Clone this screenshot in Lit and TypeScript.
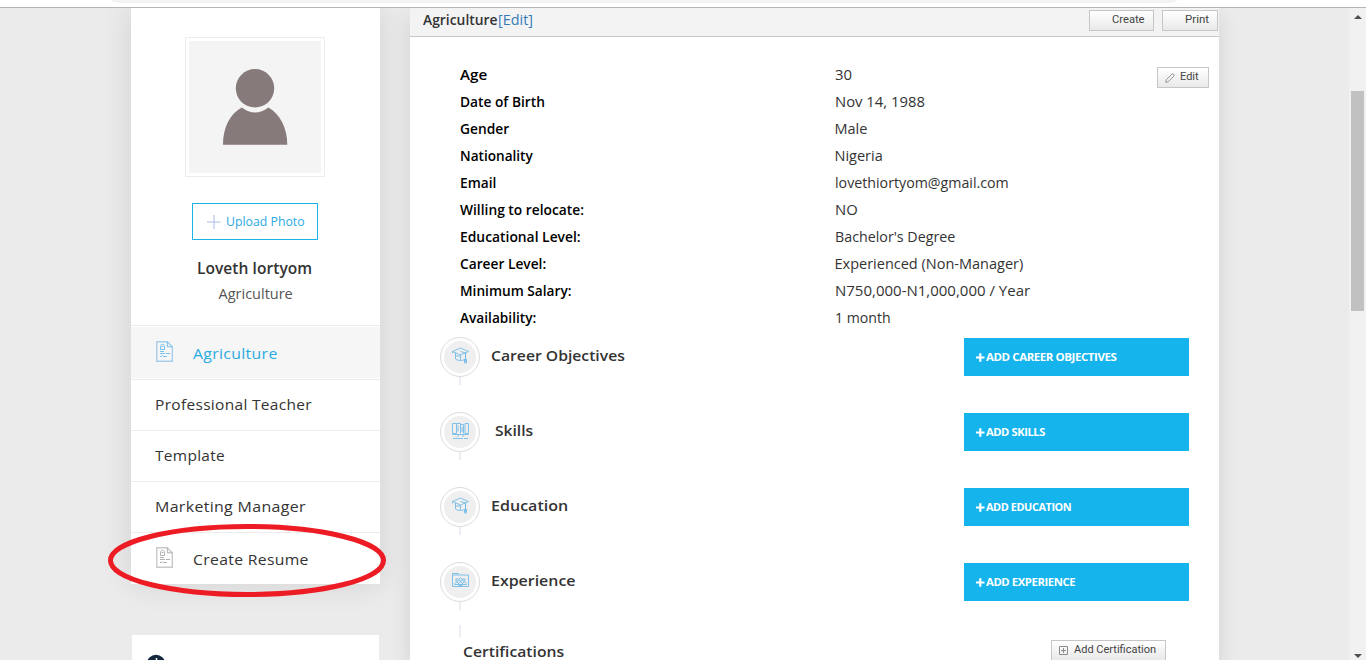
import { LitElement, html, css, svg } from "lit";
import { customElement, property } from "lit/decorators.js";

/** One line of text whose letters are widened or narrowed to fill a given width. */
@customElement("fit-text")
class FitText extends LitElement {
  @property() text = "";
  @property({ type: Number }) w = 0;
  static styles = css`
    :host { display: inline-block; white-space: pre; vertical-align: top; }
    .run { display: inline-block; transform-origin: 0 50%; vertical-align: top; }
  `;
  render() {
    return html`<span class="run">${this.text}</span>`;
  }
  updated() {
    const run = this.renderRoot.querySelector(".run") as HTMLElement;
    this.style.width = `${this.w}px`;
    run.style.transform = `scaleX(${(this.w / run.offsetWidth).toFixed(4)})`;
  }
}

const fit = (text: string, w: number) => html`<fit-text .text=${text} .w=${w}></fit-text>`;

const facts: [string, number, string, number][] = [
  ["Age", 27, "30", 17.5],
  ["Date of Birth", 84.5, "Nov 14, 1988", 90],
  ["Gender", 49, "Male", 33],
  ["Nationality", 72.5, "Nigeria", 48],
  ["Email", 36.5, "lovethiortyom@gmail.com", 173.5],
  ["Willing to relocate:", 123.5, "NO", 22.5],
  ["Educational Level:", 121, "Bachelor's Degree", 120],
  ["Career Level:", 86.5, "Experienced (Non-Manager)", 189],
  ["Minimum Salary:", 111.5, "N750,000-N1,000,000 / Year", 195.5],
  ["Availability:", 76, "1 month", 55.5],
];

const cap = svg`<path d="M.5 4.500 8.500 1l8 3.500-8 3.500zM3.500 6v6c3 2 7 2 10 0V6M8.500 4.500l5 1.500v9M12.500 12v4h2v-4M3 9h5M8.500 8v5M.5 4.500v2"/>`;
const books = svg`<path d="M.5 1.500h4v10h-4zM4.500 1.500h4v10M8.500 2.500h3v9M13 1.500h3.500v10H13zM6 3.500v6M10 5v5M.5 12.500h16M6 13v2M11 13v2M1 16.500h10M12 16.500h4"/>`;
const folder = svg`<path d="M.5 1.500h6l1 1.500h9v11.500H.5zM1 3h6"/><circle cx="5" cy="8" r="1.300"/><circle cx="8.500" cy="7.500" r="1.500"/><circle cx="12" cy="8" r="1.300"/><path d="M2.500 12.500c0-3 4-3 4-.5 0-2.500 4-2.500 4 0 0-2.500 4-2.500 4 .5zM6.500 13.500h4"/>`;

const sections = [
  { title: "Career Objectives", w: 134, glyph: cap, cta: "ADD CAREER OBJECTIVES", cw: 130.5, wide: false },
  { title: "Skills", w: 38.5, glyph: books, cta: "ADD SKILLS", cw: 58.5, wide: true },
  { title: "Education", w: 77, glyph: cap, cta: "ADD EDUCATION", cw: 85, wide: false },
  { title: "Experience", w: 85, glyph: folder, cta: "ADD EXPERIENCE", cw: 89.5, wide: false },
];

const resumeIcon = html`<svg class="doc" width="17" height="21" viewBox="0 0 17 21">
  <path class="edge" d="M.8.8h10.500l5 5v14.500H.800z" />
  <path d="M11.300.8v5h5M4.500 8.500v-3c0-3 4-3 4 0v3zM5.500 5.500h2M4 10.500h4M4 12.500h5M10 12.500h4M4 15.500h1l1.500-1M7 15.500h4" />
</svg>`;

@customElement("app-root")
class AppRoot extends LitElement {
  static styles = css`
    :host {
      display: block; position: relative; width: 1366px; height: 660px; overflow: hidden;
      background: #ebebeb; font-family: "Open Sans", "Noto Sans", sans-serif; color: #333;
    }
    * { box-sizing: border-box; }
    svg { display: block; flex: none; }
    .chrome { height: 8px; background: #fff; border-bottom: 1px solid #b4b4b4; position: relative; z-index: 2; }
    .omnibox { height: 3px; margin-left: 112px; width: 1065px; background: #f1f3f4; border-radius: 0 0 10px 10px / 0 0 3px 3px; }
    .page { display: flex; height: 652px; }
    .side { width: 249px; margin-left: 131px; flex: none; }
    .profile-card { height: 576px; background: #fff; box-shadow: 0 0 30px rgba(0,0,0,.11); display: flex; flex-direction: column; }
    .profile { height: 317px; display: flex; flex-direction: column; align-items: center; padding-top: 29px; }
    .avatar { width: 140px; height: 140px; border: 1px solid #ededed; padding: 3px; margin-right: 1px; }
    .upload { margin-top: 26px; margin-right: 1px; width: 126px; height: 37px; border: 1px solid #16b4e9; color: #2aaae2; font-size: 13px; line-height: 35px; display: flex; align-items: center; padding-left: 13.500px; gap: 5px; }
    .name { margin: 16px 1px 0 0; font-size: 15.500px; font-weight: 600; line-height: 24px; }
    .role { font-size: 14.500px; line-height: 24px; margin-top: 2px; color: #555; }
    .item { border-top: 1px solid #ececec; height: 51px; font-size: 15px; letter-spacing: .3px; display: flex; align-items: center; padding: 0 0 3px 23.500px; }
    .item.icon { padding: 0 0 0 25px; gap: 20px; height: 52px; }
    .item.on { height: 54px; background: #f6f6f6; color: #2aaae2; box-shadow: inset 0 1px #fff, inset 0 -1px #fff; }
    .doc { fill: none; stroke: #a7a7a7; stroke-width: .9; margin-bottom: 3px; }
    .doc .edge { stroke: #c9c9cd; stroke-width: 1.400; }
    .on .doc { stroke: #68bdea; }
    .on .doc .edge { stroke: #a5cdec; }
    .next-card { margin: 51px 1px 0; height: 25px; background: #fff; padding: 19px 0 0 15px; overflow: hidden; }
    .main { width: 809px; margin-left: 30px; background: #fff; box-shadow: 0 8px 20px rgba(0,0,0,.11); flex: none; }
    .head { height: 29px; background: #f3f3f3; border-bottom: 1px solid #c8c8c8; display: flex; padding: 2px 1px 0 13px; }
    .title { font-size: 13.500px; font-weight: 600; line-height: 20px; }
    .link { font-size: 14px; line-height: 20px; color: #337ab7; flex: 1; }
    .btn { height: 21px; border: 1px solid #c6c6c6; background: linear-gradient(#fff, #e9e9e9); font: 11px/17px Roboto, sans-serif; color: #444; display: flex; padding-right: 9px; justify-content: flex-end; }
    .create { width: 65px; margin-right: 8px; }
    .print { width: 56px; padding-right: 8px; }
    .facts { display: flex; height: 300px; padding: 25px 10px 0 50px; }
    .labels { width: 374.500px; font-size: 13.500px; font-weight: 600; color: #000; }
    .values { flex: 1; font-size: 14.500px; color: #333; margin-top: -1px; }
    .line { height: 27px; line-height: 27px; }
    .edit { width: 52px; margin-top: 5px; justify-content: flex-start; padding-left: 7px; gap: 5px; }
    .edit svg { margin-top: 5px; }
    .section { height: 75px; display: flex; padding: 0 30px; align-items: flex-start; }
    .marker { width: 40px; display: flex; flex-direction: column; align-items: center; }
    .ring { width: 40px; height: 40px; border: 1px solid #dcdcdc; border-radius: 50%; padding: 3px; }
    .disc { width: 32px; height: 32px; border-radius: 50%; background: #efefef; display: flex; align-items: center; justify-content: center; padding-bottom: 4px; }
    .disc svg { fill: none; stroke: #64b5e6; stroke-width: .8; }
    .stem { width: 2px; height: 8px; background: #ededf4; }
    .heading { font-size: 15px; font-weight: 600; line-height: 24px; margin: 6px 0 0 11px; flex: 1; }
    .heading.wide { margin-left: 15px; }
    .cta { width: 225px; height: 38px; margin-top: 1px; background: #16b4ec; color: #fff; font-size: 10.500px; font-weight: 700; letter-spacing: -.4px; line-height: 38px; display: flex; align-items: center; padding-left: 12px; gap: 1px; }
    .tail { padding: 0 53px; display: flex; flex-direction: column; margin-top: -12px; }
    .tail .stem { height: 12px; margin-left: -4px; }
    .cert { display: flex; justify-content: space-between; margin-top: 3px; }
    .cert .heading { margin: 0; height: 20px; line-height: 22px; }
    .add { width: 115px; padding: 0 0 0 7px; justify-content: flex-start; gap: 6px; }
    .add svg { margin-top: 5px; }
    .scroll { width: 17px; margin-left: auto; background: #f1f1f1; padding: 7px 2px 0; display: flex; flex-direction: column; align-items: center; }
    .thumb { width: 13px; height: 220px; margin: 72px 0 343px; background: #c1c1c1; flex: none; }
    .callout { position: absolute; left: 108px; top: 524px; z-index: 3; }
  `;

  render() {
    return html`
      <div class="chrome"><div class="omnibox"></div></div>
      <div class="page">
        <aside class="side">
          <div class="profile-card">
            <div class="profile">
              <div class="avatar">
                <svg width="132" height="132" viewBox="0 0 132 132">
                  <rect width="132" height="132" fill="#f4f4f4" />
                  <g fill="#877a7b">
                    <circle cx="66" cy="47.300" r="19.200" />
                    <path d="M34 103.700c0-17 7-31 18.800-37.200q13.300 10 26.600 0C91 73 98.300 87 98.300 103.700z" />
                  </g>
                </svg>
              </div>
              <div class="upload">
                <svg width="14" height="14" viewBox="0 0 14 14"><path d="M0 7h13.500M7 0v14" stroke="#a9bce8" stroke-width="1" /></svg>
                ${fit("Upload Photo", 78.5)}
              </div>
              <div class="name">${fit("Loveth Iortyom", 115.5)}</div>
              <div class="role">${fit("Agriculture", 74)}</div>
            </div>
            <div class="item icon on">${resumeIcon}${fit("Agriculture", 84.5)}</div>
            <div class="item">${fit("Professional Teacher", 157)}</div>
            <div class="item">${fit("Template", 70)}</div>
            <div class="item">${fit("Marketing Manager", 151)}</div>
            <div class="item icon">${resumeIcon}${fit("Create Resume", 115.5)}</div>
          </div>
          <div class="next-card">
            <svg width="18" height="18" viewBox="0 0 18 18"><circle cx="9" cy="10" r="9.300" fill="#14273e" /><path d="M9.500 4v6" stroke="#fff" stroke-width="1.500" /></svg>
          </div>
        </aside>
        <main class="main">
          <div class="head">
            <div class="title">${fit("Agriculture", 75)}</div>
            <div class="link">${fit("[Edit]", 35)}</div>
            <div class="btn create">${fit("Create", 32.5)}</div>
            <div class="btn print">${fit("Print", 24)}</div>
          </div>
          <div class="facts">
            <div class="labels">${facts.map((f) => html`<div class="line">${fit(f[0], f[1])}</div>`)}</div>
            <div class="values">${facts.map((f) => html`<div class="line">${fit(f[2], f[3])}</div>`)}</div>
            <div class="btn edit">
              <svg width="10" height="10" viewBox="0 0 10 10"><path d="M.7 9.300 1.200 6.800 7 1c1-1 3 1 2 2L3.200 8.800z" fill="none" stroke="#8c8c8c" stroke-width=".9" /></svg>
              ${fit("Edit", 19)}
            </div>
          </div>
          ${sections.map(
            (s) => html`<div class="section">
              <div class="marker">
                <div class="ring"><div class="disc"><svg width="17" height="17" viewBox="0 0 17 17">${s.glyph}</svg></div></div>
                <div class="stem"></div>
              </div>
              <div class="heading ${s.wide ? "wide" : ""}">${fit(s.title, s.w)}</div>
              <div class="cta">
                <svg width="9" height="9" viewBox="0 0 9 9"><path d="M0 4.500h8.500M4.300.3v8.400" stroke="#fff" stroke-width="2.200" /></svg>
                ${fit(s.cta, s.cw)}
              </div>
            </div>`
          )}
          <div class="tail">
            <div class="stem"></div>
            <div class="cert">
              <div class="heading">${fit("Certifications", 101.5)}</div>
              <div class="btn add">
                <svg width="9" height="9" viewBox="0 0 9 9"><path d="M.5.5h8v8h-8zM4.500 2v5M2 4.500h5" fill="none" stroke="#8c8c8c" /></svg>
                ${fit("Add Certification", 82)}
              </div>
            </div>
          </div>
        </main>
        <div class="scroll">
          <svg width="8" height="4" viewBox="0 0 8 4"><path d="M0 4 4 0l4 4z" fill="#505050" /></svg>
          <div class="thumb"></div>
          <svg width="8" height="4" viewBox="0 0 8 4"><path d="M0 0h8L4 4z" fill="#505050" /></svg>
        </div>
      </div>
      <svg class="callout" width="278" height="73" viewBox="0 0 278 73">
        <ellipse cx="139" cy="36.500" rx="136.500" ry="34" fill="none" stroke="#ed1c24" stroke-width="5" />
      </svg>
    `;
  }
}
